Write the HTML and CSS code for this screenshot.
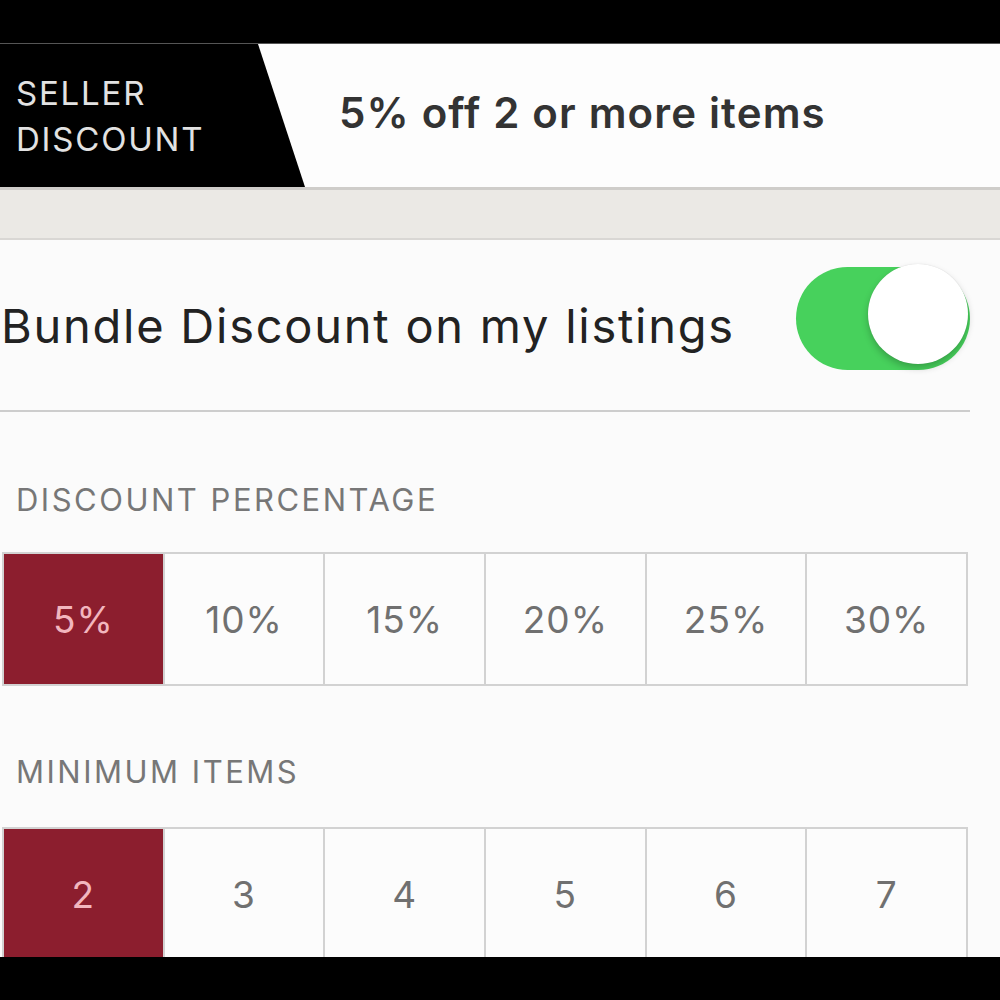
FILE: index.html
```html
<!DOCTYPE html>
<html>
<head>
<meta charset="utf-8">
<link rel="stylesheet" href="styles.css">
</head>
<body>
<div class="topbar"></div>
<div class="screen">
  <div class="header">
    <div class="tag"><span>SELLER<br>DISCOUNT</span></div>
    <div class="summary">5% off 2 or more items</div>
  </div>
  <div class="band"></div>
  <div class="toggle-row">
    <div class="toggle-label">Bundle Discount on my listings</div>
    <div class="switch"><div class="knob"></div></div>
  </div>
  <div class="divider"></div>
  <div class="section-title">DISCOUNT PERCENTAGE</div>
  <div class="options">
    <div class="opt selected">5%</div>
    <div class="opt">10%</div>
    <div class="opt">15%</div>
    <div class="opt">20%</div>
    <div class="opt">25%</div>
    <div class="opt">30%</div>
  </div>
  <div class="section-title second">MINIMUM ITEMS</div>
  <div class="options">
    <div class="opt selected">2</div>
    <div class="opt">3</div>
    <div class="opt">4</div>
    <div class="opt">5</div>
    <div class="opt">6</div>
    <div class="opt">7</div>
  </div>
</div>
<div class="bottombar"></div>
</body>
</html>
```

FILE: styles.css
```css
html, body {
  margin: 0;
  padding: 0;
  background: #000;
  width: 1000px;
  height: 1000px;
  overflow: hidden;
  font-family: "Inter", "Open Sans", sans-serif;
}
.topbar {
  height: 43px;
  background: #000;
}
.bottombar {
  height: 43px;
  background: #000;
}
.screen {
  height: 914px;
  background: #fbfbfb;
  overflow: hidden;
}
.header {
  height: 144px;
  display: flex;
  align-items: center;
  background: #fdfdfd;
  border-top: 1px solid #555;
  box-sizing: border-box;
}
.tag {
  width: 305px;
  height: 100%;
  background: #000;
  clip-path: polygon(0 0, 258px 0, 305px 100%, 0 100%);
  display: flex;
  align-items: center;
  color: #e2e2e2;
  font-size: 33px;
  line-height: 46px;
  padding-left: 16px;
  box-sizing: border-box;
  letter-spacing: 1.8px;
}
.summary {
  margin-left: 34px;
  font-size: 42px;
  color: #333;
  font-weight: 600;
  margin-top: -6px;
  letter-spacing: 1.15px;
}
.band {
  height: 48px;
  background: #ebe9e5;
  border-top: 3px solid #cfcdca;
  border-bottom: 2px solid #d9d7d4;
}
.toggle-row {
  height: 170px;
  display: flex;
  align-items: center;
  justify-content: space-between;
  padding-right: 30px;
}
.toggle-label {
  font-size: 47px;
  color: #222;
  margin-left: 1px;
  letter-spacing: 1.75px;
}
.switch {
  width: 174px;
  height: 103px;
  border-radius: 52px;
  background: #47d15c;
  position: relative;
  margin-top: -14px;
}
.knob {
  position: absolute;
  right: 2px;
  top: -3px;
  width: 100px;
  height: 100px;
  border-radius: 50%;
  background: #fff;
  box-shadow: 0 4px 7px rgba(0,0,0,0.22), 0 0 1px rgba(0,0,0,0.15);
}
.divider {
  height: 2px;
  background: #cdcdcd;
  width: 970px;
}
.section-title {
  font-size: 31px;
  color: #777;
  padding-left: 16px;
  height: 140px;
  line-height: 176px;
  box-sizing: border-box;
  letter-spacing: 2.5px;
}
.section-title.second {
  height: 141px;
  line-height: 172px;
}
.options {
  display: flex;
  margin-left: 2px;
  width: 966px;
  height: 134px;
  border: 2px solid #d2d2d2;
  box-sizing: border-box;
}
.opt {
  flex: 1;
  display: flex;
  align-items: center;
  justify-content: center;
  font-size: 37px;
  color: #707070;
  border-left: 2px solid #d2d2d2;
  background: #fcfcfc;
  letter-spacing: 1px;
}
.opt:first-child {
  border-left: none;
}
.opt.selected {
  background: #8c1e2e;
  color: #f2b6be;
}
```
